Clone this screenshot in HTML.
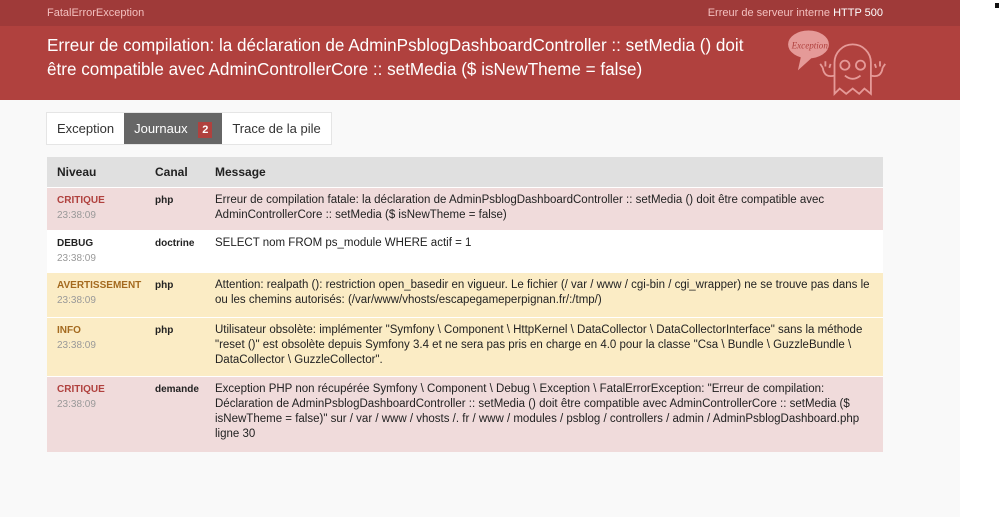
<!DOCTYPE html>
<html><head><meta charset="utf-8"><style>
*{margin:0;padding:0;box-sizing:border-box}
body{width:1000px;height:517px;background:#fff;font-family:"Liberation Sans",Arial,sans-serif;position:relative;overflow:hidden}
#page{position:absolute;left:0;top:0;width:960px;height:517px;background:#f9f9f9}
#top{height:26px;background:#9f3a39;color:#f3c0bf;font-size:11px;line-height:27px;padding-left:47px;position:relative}
#top .r{position:absolute;right:77px;top:0}
#top b{color:#fff;font-weight:normal}
#hdr{height:74px;background:#b0413e;color:#fff;font-size:17.1px;line-height:24px;padding:8px 0 0 47px;position:relative}
#tabs{position:absolute;left:46px;top:112px;height:33px;display:flex;border:1px solid #e5e5e5;background:#fff;font-size:13px}
#tabs div{padding:0 10px;line-height:31px;color:#333}
#tabs .a{background:#666;color:#fff}
#tabs .n{display:inline-block;background:#b0413e;color:#fff;font-weight:bold;font-size:11px;padding:0 4px;line-height:16px;margin-left:7px}
table{position:absolute;left:47px;top:157px;width:836px;border-collapse:collapse;table-layout:fixed;font-size:11.5px;color:#222}
th{background:#e0e0e0;text-align:left;font-size:12px;height:30px;padding:0 10px;font-weight:bold;color:#222}
td{vertical-align:top;padding:5px 10px 6px;line-height:15px;border-top:1px solid #fff}
.lv{font-size:10px;font-weight:bold}
.t{color:#999;font-size:10px}
.cr{background:#f0dbdb}.cr .lv{color:#b0413e}
.dg{background:#fff}
.wa{background:#fbecc5}.wa .lv{color:#a46a1f}
td.c{font-size:10px;font-weight:bold}
</style></head><body>
<div id="page">
<div id="top">FatalErrorException<span class="r">Erreur de serveur interne <b>HTTP 500</b></span></div>
<div id="hdr">Erreur de compilation: la déclaration de AdminPsblogDashboardController :: setMedia () doit<br>être compatible avec AdminControllerCore :: setMedia ($ isNewTheme = false)
<svg style="position:absolute;left:776px;top:-5px" width="117" height="78" viewBox="0 0 90 60" fill="none" stroke="#e59a98" stroke-width="1.4">
<ellipse cx="25" cy="18" rx="15" ry="10" fill="#e59a98"/>
<path d="M20 27 L18 36 L28 27" fill="#e59a98"/>
<text x="12" y="21" font-size="7" fill="#b0413e" stroke="none" font-style="italic" font-family="Liberation Serif,serif">Exception!</text>
<path d="M45 56 V32 a14 14 0 0 1 28 0 V56 l-5 -4 l-4 4 l-5-4 l-5 4 l-5 -4 z"/>
<circle cx="53" cy="34" r="3.5"/><circle cx="65" cy="34" r="3.5"/>
<path d="M53 42 q6 5 12 0"/>
<path d="M45 42 q-8 2 -9 -6 M36 36 l-2 -3 M38 35 l0 -4 M41 36 l1 -3"/>
<path d="M73 42 q8 2 9 -6 M82 36 l2 -3 M80 35 l0 -4 M77 36 l-1 -3"/>
</svg></div>
<div id="tabs"><div>Exception</div><div class="a">Journaux <span class="n">2</span></div><div>Trace de la pile</div></div>
<table>
<colgroup><col style="width:98px"><col style="width:60px"><col></colgroup>
<tr><th>Niveau</th><th>Canal</th><th>Message</th></tr>
<tr class="cr" style="height:43px"><td><div class="lv">CRITIQUE</div><div class="t">23:38:09</div></td><td class="c">php</td><td>Erreur de compilation fatale: la déclaration de AdminPsblogDashboardController :: setMedia () doit être compatible avec AdminControllerCore :: setMedia ($ isNewTheme = false)</td></tr>
<tr class="dg" style="height:41px"><td><div class="lv">DEBUG</div><div class="t">23:38:09</div></td><td class="c">doctrine</td><td>SELECT nom FROM ps_module WHERE actif = 1</td></tr>
<tr class="wa" style="height:45px"><td><div class="lv">AVERTISSEMENT</div><div class="t">23:38:09</div></td><td class="c">php</td><td>Attention: realpath (): restriction open_basedir en vigueur. Le fichier (/ var / www / cgi-bin / cgi_wrapper) ne se trouve pas dans le ou les chemins autorisés: (/var/www/vhosts/escapegameperpignan.fr/:/tmp/)</td></tr>
<tr class="wa" style="height:59px"><td><div class="lv">INFO</div><div class="t">23:38:09</div></td><td class="c">php</td><td>Utilisateur obsolète: implémenter "Symfony \ Component \ HttpKernel \ DataCollector \ DataCollectorInterface" sans la méthode "reset ()" est obsolète depuis Symfony 3.4 et ne sera pas pris en charge en 4.0 pour la classe "Csa \ Bundle \ GuzzleBundle \ DataCollector \ GuzzleCollector".</td></tr>
<tr class="cr" style="height:76px"><td><div class="lv">CRITIQUE</div><div class="t">23:38:09</div></td><td class="c">demande</td><td>Exception PHP non récupérée Symfony \ Component \ Debug \ Exception \ FatalErrorException: "Erreur de compilation: Déclaration de AdminPsblogDashboardController :: setMedia () doit être compatible avec AdminControllerCore :: setMedia ($ isNewTheme = false)" sur / var / www / vhosts /. fr / www / modules / psblog / controllers / admin / AdminPsblogDashboard.php ligne 30</td></tr>
</table>
</div>
<div style="position:absolute;left:995px;top:3px;width:4px;height:5px;background:#111"></div>
</body></html>
